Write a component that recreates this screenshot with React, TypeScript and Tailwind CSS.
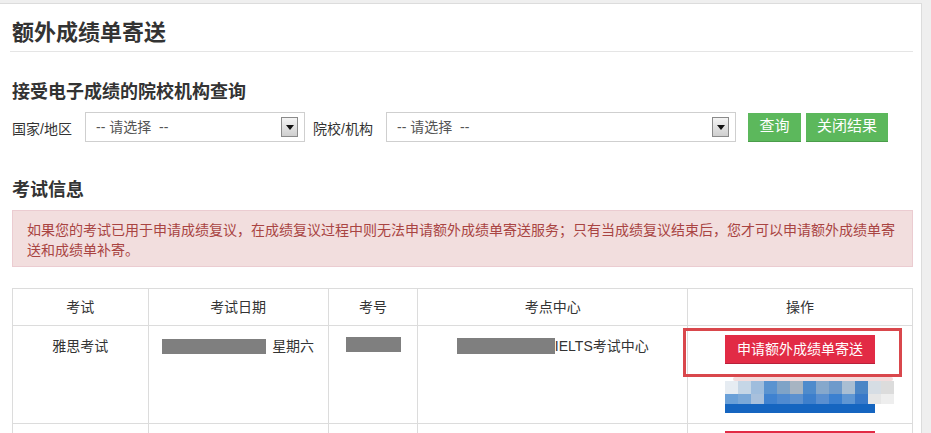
const font = { fontFamily: '"Liberation Sans", "Noto Sans CJK SC", sans-serif' };

function FakeSelect({ width }: { width: string }) {
  return (
    <div className={`${width} h-[30px] border border-[#cfcfcf] bg-white flex items-center justify-between pl-[10px] pr-[6px]`}>
      <span className="text-[#555] text-[14px]">-- 请选择 &nbsp;--</span>
      <div className="w-[17px] h-[20px] border border-[#8a8a8a] bg-gradient-to-b from-[#f4f4f4] to-[#cfcfcf] flex items-center justify-center">
        <svg width="8" height="5" viewBox="0 0 8 5">
          <path d="M0 0h8L4 5z" fill="#111" />
        </svg>
      </div>
    </div>
  );
}

const mosaicTop = ["#e6ecf2", "#c5d6e6", "#9fbddd", "#5a93d0", "#7fa3c7", "#a7b4c2", "#4f8bcc", "#86a8cc", "#6e9acb", "#a9bed3", "#4c86c6", "#d6dde4", "#dcdcdc"];
const mosaicBottom = ["#6aa0d8", "#7aa8d8", "#a8c0dc", "#3f82d0", "#4f8ad0", "#5d91cf", "#3d7fcc", "#5a8fd0", "#3b80d0", "#5f96d3", "#3879c9", "#e6e6e6", "#eeeeee"];

export default function App() {
  return (
    <div className="w-[931px] h-[433px] overflow-hidden bg-[#efefef] pt-[3px] text-[#333]" style={font}>
      <div className="w-[922px] h-[440px] bg-white border-t border-r border-[#dcdcdc] pl-[12px] pr-[8px]">
        <h1 className="text-[22px] font-bold leading-[30px] pt-[14px] pb-[3px] border-b border-[#e5e5e5] -ml-[2px] pl-[2px]">
          额外成绩单寄送
        </h1>

        <h2 className="text-[18px] font-bold leading-[24px] mt-[28px]">接受电子成绩的院校机构查询</h2>
        <div className="flex items-center mt-[8px] text-[14px]">
          <span className="mt-[5px] w-[73px]">国家/地区</span>
          <FakeSelect width="w-[220px]" />
          <span className="mt-[5px] ml-[8px] w-[73px]">院校/机构</span>
          <FakeSelect width="w-[350px]" />
          <button className="ml-[12px] w-[53px] h-[29px] bg-[#5cb85c] text-white text-[15px] border-b border-[#4a9d4a]">查询</button>
          <button className="ml-[5px] w-[82px] h-[29px] bg-[#5cb85c] text-white text-[15px] border-b border-[#4a9d4a]">关闭结果</button>
        </div>

        <h2 className="text-[18px] font-bold leading-[24px] mt-[36px]">考试信息</h2>
        <div className="mt-[8px] h-[57px] border border-[#ebccd1] bg-[#f2dede] text-[#a94442] text-[14px] leading-[20px] pt-[9px] pl-[14px] pr-[12px]">
          如果您的考试已用于申请成绩复议，在成绩复议过程中则无法申请额外成绩单寄送服务；只有当成绩复议结束后，您才可以申请额外成绩单寄送和成绩单补寄。
        </div>

        <table className="mt-[21px] w-[901px] border-collapse text-[14px] text-center">
          <thead>
            <tr className="h-[37px]">
              <th className="w-[136px] border border-[#dcdcdc] font-normal">考试</th>
              <th className="w-[180px] border border-[#dcdcdc] font-normal">考试日期</th>
              <th className="w-[90px] border border-[#dcdcdc] font-normal">考号</th>
              <th className="w-[270px] border border-[#dcdcdc] font-normal">考点中心</th>
              <th className="w-[225px] border border-[#dcdcdc] font-normal">操作</th>
            </tr>
          </thead>
          <tbody>
            <tr className="h-[98px] align-top">
              <td className="border border-[#dcdcdc] pt-[10px] leading-[20px]">雅思考试</td>
              <td className="border border-[#dcdcdc] pt-[10px] leading-[20px]">
                <div className="flex items-center justify-center gap-[6px]">
                  <span className="inline-block w-[104px] h-[15px] bg-[#7f7f7f]" />
                  <span>星期六</span>
                </div>
              </td>
              <td className="border border-[#dcdcdc] pt-[10px] leading-[20px]">
                <div className="flex justify-center pt-[1px]">
                  <span className="inline-block w-[55px] h-[15px] bg-[#7f7f7f]" />
                </div>
              </td>
              <td className="border border-[#dcdcdc] pt-[10px] leading-[20px]">
                <div className="flex items-center justify-center">
                  <span className="inline-block w-[98px] h-[16px] bg-[#7f7f7f]" />
                  <span>IELTS考试中心</span>
                </div>
              </td>
              <td className="relative border border-[#dcdcdc] pt-[9px]">
                <div className="absolute left-[-5px] top-[2px] w-[219px] h-[49px] border-[3px] border-[#d9474c]" />
                <div className="flex flex-col items-center">
                  <button className="w-[150px] h-[29px] bg-[#e22b45] text-white text-[14px] border-b border-[#b8203a]">
                    申请额外成绩单寄送
                  </button>
                  <div className="relative mt-[13px] w-[150px] h-[36px]">
                    <div className="absolute left-0 top-[26px] w-[150px] h-[10px] bg-[#1565c0]" />
                    <div className="absolute left-0 top-[4px] flex">
                      {mosaicTop.map((c, i) => (
                        <span key={i} className="block w-[13px] h-[13px]" style={{ background: c }} />
                      ))}
                    </div>
                    <div className="absolute left-0 top-[17px] flex">
                      {mosaicBottom.map((c, i) => (
                        <span key={i} className="block w-[13px] h-[10px]" style={{ background: c }} />
                      ))}
                    </div>
                    <div className="absolute left-[8px] top-0 w-[160px] h-[4px] bg-[#f3dcdc] rounded-full" />
                  </div>
                </div>
              </td>
            </tr>
            <tr className="h-[40px] align-top">
              <td className="border border-[#dcdcdc]" />
              <td className="border border-[#dcdcdc]" />
              <td className="border border-[#dcdcdc]" />
              <td className="border border-[#dcdcdc]" />
              <td className="border border-[#dcdcdc] pt-[7px]">
                <div className="flex justify-center">
                  <div className="w-[150px] h-[29px] bg-[#e22b45]" />
                </div>
              </td>
            </tr>
          </tbody>
        </table>
      </div>
    </div>
  );
}
